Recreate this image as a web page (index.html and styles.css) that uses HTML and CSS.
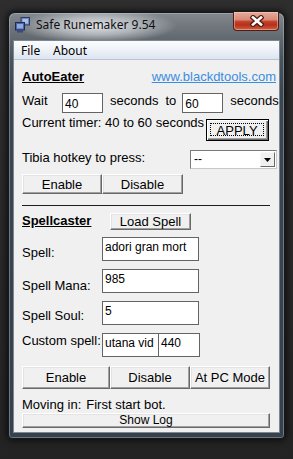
FILE: index.html
```html
<!DOCTYPE html>
<html>
<head>
<meta charset="utf-8">
<link rel="stylesheet" href="styles.css">
</head>
<body>
<div class="window">
  <div class="titlebar">
    <svg class="app-icon" width="15" height="16" viewBox="0 0 15 16">
      <rect x="6" y="0.5" width="8.5" height="7.5" fill="#6f86b8" stroke="#2c3a66"/>
      <rect x="7.5" y="2" width="5.5" height="4.5" fill="#a9bfe6"/>
      <rect x="0.5" y="5.5" width="9" height="7.5" fill="#4d67a6" stroke="#1f2a55"/>
      <rect x="2" y="7" width="6" height="4.5" fill="#8ea9df"/>
      <rect x="2" y="13.5" width="6" height="2" fill="#3a4a7a"/>
    </svg>
    <span class="title">Safe Runemaker 9.54</span>
    <div class="close-btn">
      <svg width="14" height="12" viewBox="0 0 14 12">
        <path d="M3 2.5 L11 9.5 M11 2.5 L3 9.5" stroke="#4f1c14" stroke-width="5" stroke-linecap="square"/>
        <path d="M3 2.5 L11 9.5 M11 2.5 L3 9.5" stroke="#ffffff" stroke-width="2.6" stroke-linecap="square"/>
      </svg>
    </div>
  </div>
  <div class="client">
    <div class="menubar">
      <span class="menu-item menu-file">File</span>
      <span class="menu-item">About</span>
    </div>
    <div class="content">
      <div class="row head-row">
        <span class="heading">AutoEater</span>
        <span class="link">www.blackdtools.com</span>
      </div>
      <div class="row wait-row">
        <span class="txt lbl-wait">Wait</span>
        <div class="input in-wait">40</div>
        <span class="txt gap7">seconds</span>
        <span class="txt gap7">to</span>
        <div class="input in-wait gap6">60</div>
        <span class="txt gap7">seconds</span>
      </div>
      <div class="row timer-row">
        <span class="txt">Current timer: 40 to 60 seconds</span>
        <div class="btn btn-default"><span class="focus">APPLY</span></div>
      </div>
      <div class="row hotkey-row">
        <span class="txt lbl-hotkey">Tibia hotkey to press:</span>
        <div class="select">
          <span class="select-val">--</span>
          <span class="select-arrow"><svg width="7" height="4" viewBox="0 0 7 4"><path d="M0 0 H7 L3.5 4 Z" fill="#000"/></svg></span>
        </div>
      </div>
      <div class="row btn-row1">
        <div class="btn b80">Enable</div>
        <div class="btn b81">Disable</div>
      </div>
      <div class="sep"></div>
      <div class="row spell-head">
        <span class="heading heading-spell">Spellcaster</span>
        <div class="btn btn-load">Load Spell</div>
      </div>
      <div class="row field-row first-field">
        <span class="txt field-lbl pad8">Spell:</span>
        <div class="input in-field">adori gran mort</div>
      </div>
      <div class="row field-row">
        <span class="txt field-lbl pad9">Spell Mana:</span>
        <div class="input in-field">985</div>
      </div>
      <div class="row field-row">
        <span class="txt field-lbl pad7">Spell Soul:</span>
        <div class="input in-field">5</div>
      </div>
      <div class="row field-row">
        <span class="txt field-lbl">Custom spell:</span>
        <div class="input in-custom1">utana vid</div>
        <div class="input in-custom2">440</div>
      </div>
      <div class="row btn-row2">
        <div class="btn b88">Enable</div>
        <div class="btn b80">Disable</div>
        <div class="btn b80">At PC Mode</div>
      </div>
      <div class="status"><span>Moving in:</span><span class="status-val">First start bot.</span></div>
      <div class="btn btn-log">Show Log</div>
    </div>
  </div>
</div>
</body>
</html>
```
FILE: styles.css
```css
html, body {
  margin: 0;
  padding: 0;
}
body {
  width: 293px;
  height: 459px;
  overflow: hidden;
  background: linear-gradient(180deg, #2e2e2e 0%, #282828 60%, #232323 100%);
  font-family: "Liberation Sans", Arial, sans-serif;
  font-size: 13px;
  color: #000;
}
.window {
  margin: 12px 0 0 8px;
  width: 277px;
  height: 427px;
  box-sizing: border-box;
  border: 1px solid #15191e;
  border-radius: 7px 7px 4px 4px;
  padding: 0 4px 5px 4px;
  display: flex;
  flex-direction: column;
  background:
    radial-gradient(ellipse 80px 17px at 88px 13px, rgba(226,229,232,0.97) 0%, rgba(205,209,213,0.7) 50%, rgba(150,156,162,0) 100%),
    linear-gradient(180deg, #82888e 0px, #70767c 14px, #60676e 27px, #4a545d 45px, #3b4651 80px, #36414b 100%);
  box-shadow: 0 0 7px 1px rgba(0,0,0,0.75), inset 0 0 0 1px rgba(210,220,230,0.35);
}
.titlebar {
  height: 27px;
  display: flex;
  align-items: flex-start;
  flex-shrink: 0;
}
.app-icon {
  margin: 4px 0 0 2px;
  flex-shrink: 0;
}
.title {
  margin: 4px 0 0 6px;
  font-family: "Noto Sans", "Open Sans", sans-serif;
  font-size: 12px;
  line-height: 16px;
  color: #101010;
  white-space: nowrap;
}
.close-btn {
  margin: -1px 1px 0 auto;
  width: 46px;
  height: 19px;
  box-sizing: border-box;
  border: 1px solid #4a1f18;
  border-top: none;
  border-radius: 0 0 4px 4px;
  background: linear-gradient(180deg, #e6ab9e 0%, #d88a77 42%, #c23f28 54%, #b5301b 72%, #d2603f 100%);
  box-shadow: inset 0 0 0 1px rgba(255,215,205,0.45);
  display: flex;
  align-items: center;
  justify-content: center;
}
.close-btn svg {
  margin-left: 2px;
}
.client {
  flex: 1;
  display: flex;
  flex-direction: column;
  border: 1px solid #7c8791;
  background: #f0f0f0;
  overflow: hidden;
}
.menubar {
  height: 18px;
  flex-shrink: 0;
  border-bottom: 1px solid #b9c3d2;
  background: linear-gradient(180deg, #fbfcfe 0%, #eef2f8 50%, #dde4f0 100%);
  display: flex;
  align-items: center;
  padding-left: 7px;
  font-family: "Noto Sans", "Open Sans", sans-serif;
  font-size: 12px;
}
.menu-file {
  width: 32px;
}
.content {
  padding-left: 8px;
  display: flex;
  flex-direction: column;
}
.row {
  display: flex;
  align-items: flex-start;
  flex-shrink: 0;
}
.txt {
  line-height: 16px;
  white-space: nowrap;
  flex-shrink: 0;
}
.head-row {
  margin-top: 8px;
  width: 254px;
  height: 18px;
  justify-content: space-between;
  line-height: 18px;
}
.heading {
  font-weight: bold;
  text-decoration: underline;
  white-space: nowrap;
}
.link {
  color: #3b8de2;
  text-decoration: underline;
  white-space: nowrap;
}
.input {
  box-sizing: border-box;
  background: #fff;
  border: 1px solid #646464;
  font-size: 12px;
  line-height: 14px;
  padding: 2px 0 0 2px;
  white-space: nowrap;
  overflow: hidden;
  flex-shrink: 0;
}
.wait-row {
  margin-top: 7px;
  height: 20px;
}
.lbl-wait {
  width: 40px;
}
.in-wait {
  width: 41px;
  height: 20px;
  padding-top: 3px;
}
.gap7 {
  margin-left: 7px;
}
.gap6 {
  margin-left: 6px;
}
.timer-row {
  margin-top: 2px;
}
.btn {
  box-sizing: border-box;
  border: 1px solid;
  border-color: #ffffff #696969 #696969 #ffffff;
  box-shadow: inset -1px -1px 0 #a0a0a0, inset 1px 1px 0 #e3e3e3;
  background: #f0f0f0;
  display: flex;
  align-items: center;
  justify-content: center;
  white-space: nowrap;
  flex-shrink: 0;
}
.btn-default {
  margin: 4px 0 0 2px;
  width: 63px;
  height: 22px;
  border: 1px solid #000;
  box-shadow: inset 1px 1px 0 #fff, inset -1px -1px 0 #696969, inset -2px -2px 0 #a0a0a0;
  padding: 3px 4px 4px 3px;
}
.focus {
  flex: 1;
  align-self: stretch;
  border: 1px dotted #000;
  display: flex;
  align-items: center;
  justify-content: center;
  padding-top: 1px;
}
.hotkey-row {
  margin-top: 9px;
}
.lbl-hotkey {
  width: 168px;
}
.select {
  width: 87px;
  height: 19px;
  box-sizing: border-box;
  border: 1px solid;
  border-color: #7a7a7a #c8c8c8 #c8c8c8 #7a7a7a;
  background: #fff;
  display: flex;
  align-items: stretch;
  flex-shrink: 0;
}
.select-val {
  flex: 1;
  font-size: 12px;
  line-height: 17px;
  padding-left: 3px;
}
.select-arrow {
  width: 15px;
  box-sizing: border-box;
  margin: 1px;
  border: 1px solid;
  border-color: #f8f8f8 #696969 #696969 #f8f8f8;
  background: #f0f0f0;
  display: flex;
  align-items: center;
  justify-content: center;
}
.btn-row1 {
  margin-top: 5px;
  height: 20px;
}
.btn-row1 .btn {
  height: 20px;
}
.b80 { width: 80px; }
.b81 { width: 81px; }
.b88 { width: 88px; }
.sep {
  margin-top: 11px;
  width: 248px;
  height: 1px;
  background: #1e1e1e;
  flex-shrink: 0;
}
.spell-head {
  margin-top: 7px;
}
.heading-spell {
  width: 88px;
  line-height: 16px;
}
.btn-load {
  width: 81px;
  height: 17px;
}
.field-row {
  margin-top: 8px;
  height: 24px;
}
.first-field {
  margin-top: 7px;
}
.field-lbl {
  width: 80px;
}
.pad7 { padding-top: 7px; }
.pad8 { padding-top: 8px; }
.pad9 { padding-top: 9px; }
.in-field {
  width: 97px;
  height: 24px;
}
.in-custom1 {
  width: 57px;
  height: 24px;
}
.in-custom2 {
  width: 42px;
  height: 24px;
  margin-left: -1px;
}
.btn-row2 {
  margin-top: 9px;
  height: 23px;
}
.btn-row2 .btn {
  height: 23px;
}
.status {
  margin-top: 8px;
  line-height: 16px;
  white-space: nowrap;
}
.status-val {
  margin-left: 5px;
}
.btn-log {
  width: 248px;
  height: 15px;
  font-size: 12px;
  line-height: 13px;
}
```
